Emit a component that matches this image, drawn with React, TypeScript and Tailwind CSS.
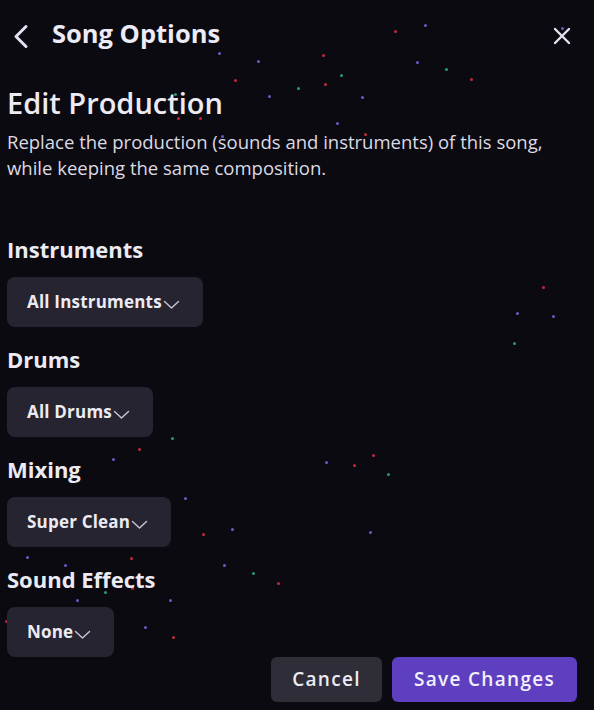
import type { ReactNode } from 'react';

type Dot = [number, number, 'r' | 'p' | 'g'];

// Starfield sprinkled over the panel background.
const DOTS: Dot[] = [
  [395, 31, 'r'], [425, 25, 'p'], [562, 28, 'p'], [417, 62, 'p'], [446, 69, 'g'], [471, 79, 'r'],
  [219, 53, 'p'], [258, 61, 'p'], [323, 55, 'r'], [341, 75, 'g'], [235, 80, 'r'], [175, 94, 'g'],
  [298, 88, 'g'], [325, 84, 'r'], [269, 96, 'p'], [362, 97, 'p'], [178, 118, 'r'], [200, 118, 'r'],
  [222, 136, 'p'], [337, 123, 'p'], [365, 134, 'r'], [543, 287, 'r'], [517, 313, 'p'], [553, 316, 'p'],
  [514, 343, 'g'], [172, 438, 'g'], [139, 449, 'r'], [113, 459, 'p'], [326, 462, 'p'], [354, 465, 'r'],
  [373, 455, 'r'], [388, 474, 'g'], [185, 498, 'p'], [203, 534, 'r'], [232, 529, 'p'], [370, 532, 'p'],
  [27, 557, 'p'], [131, 558, 'r'], [65, 565, 'p'], [224, 565, 'p'], [253, 573, 'g'], [278, 583, 'r'],
  [132, 588, 'r'], [105, 592, 'g'], [77, 600, 'p'], [170, 600, 'p'], [6, 621, 'r'], [145, 627, 'p'],
  [173, 637, 'r'],
];

const DOT_CLS = {
  r: 'bg-[#c4283f]',
  p: 'bg-[#6a5cc8]',
  g: 'bg-[#2a9a74]',
};

const SECTIONS = [
  { label: 'Instruments', value: 'All Instruments' },
  { label: 'Drums', value: 'All Drums' },
  { label: 'Mixing', value: 'Super Clean' },
  { label: 'Sound Effects', value: 'None' },
];

function Chevron() {
  return (
    <svg width="17" height="9" viewBox="0 0 17 9" className="mt-[5px] ml-[1px]">
      <path d="M1.5 1.5l7 6.5 7-6.5" fill="none" stroke="#c9c6d8" strokeWidth="1.4" strokeLinecap="round" strokeLinejoin="round" />
    </svg>
  );
}

function Select({ children }: { children: ReactNode }) {
  return (
    <button className="flex h-[50px] items-center rounded-lg bg-[#262430] pl-5 pr-[23px] text-[17px] font-bold tracking-[0.2px] text-[#ecebf3]">
      {children}
      <Chevron />
    </button>
  );
}

export default function App() {
  return (
    <div
      className="relative h-[710px] w-[594px] overflow-hidden bg-[#0b0a10] text-[#ecebf3]"
      style={{ fontFamily: '"Open Sans", "Noto Sans", sans-serif' }}
    >
      {DOTS.map(([x, y, c], i) => (
        <span
          key={i}
          className={`absolute h-[3px] w-[3px] rounded-full ${DOT_CLS[c]}`}
          style={{ left: x - 1, top: y - 1 }}
        />
      ))}

      <div className="relative flex h-full flex-col px-[7px]">
        <div className="flex h-[72px] items-center">
          <svg width="20" height="25" viewBox="0 0 20 25" className="ml-[5px] mr-[20px]">
            <path d="M14 2.5L4 12.5l10 10" fill="none" stroke="#e4e1f2" strokeWidth="3" strokeLinecap="round" strokeLinejoin="round" />
          </svg>
          <h1 className="mb-[6px] text-[25.5px] font-bold text-[#ecebf7]">Song Options</h1>
          <svg width="20" height="20" viewBox="0 0 20 20" className="ml-auto mr-[15px]">
            <path d="M3 3l14 14M17 3L3 17" stroke="#e4e1f2" strokeWidth="2.4" strokeLinecap="round" />
          </svg>
        </div>

        <h2 className="mt-[13px] text-[29px] font-semibold leading-9">Edit Production</h2>
        <p className="mt-[8px] text-[18.5px] leading-[26px] text-[#dcdae4]">
          Replace the production (sounds and instruments) of this song,
          <br />
          while keeping the same composition.
        </p>

        <div className="mt-[49px] flex flex-col">
          {SECTIONS.map((s) => (
            <div key={s.label} className="flex h-[110px] flex-col items-start">
              <h3 className="h-[38px] text-[22px] font-bold leading-[38px]">{s.label}</h3>
              <div className="mt-[9px]">
                <Select>{s.value}</Select>
              </div>
            </div>
          ))}
        </div>

        <div className="absolute bottom-[8px] right-[17px] flex gap-[10px]">
          <button className="h-[45px] w-[111px] rounded-md bg-[#2e2d38] text-[19px] font-semibold tracking-[1.3px] text-[#ecebf3]">
            Cancel
          </button>
          <button className="h-[45px] w-[185px] rounded-md bg-[#5e3fbf] text-[19px] font-semibold tracking-[1.3px] text-[#f2f0fb]">
            Save Changes
          </button>
        </div>
      </div>
    </div>
  );
}
